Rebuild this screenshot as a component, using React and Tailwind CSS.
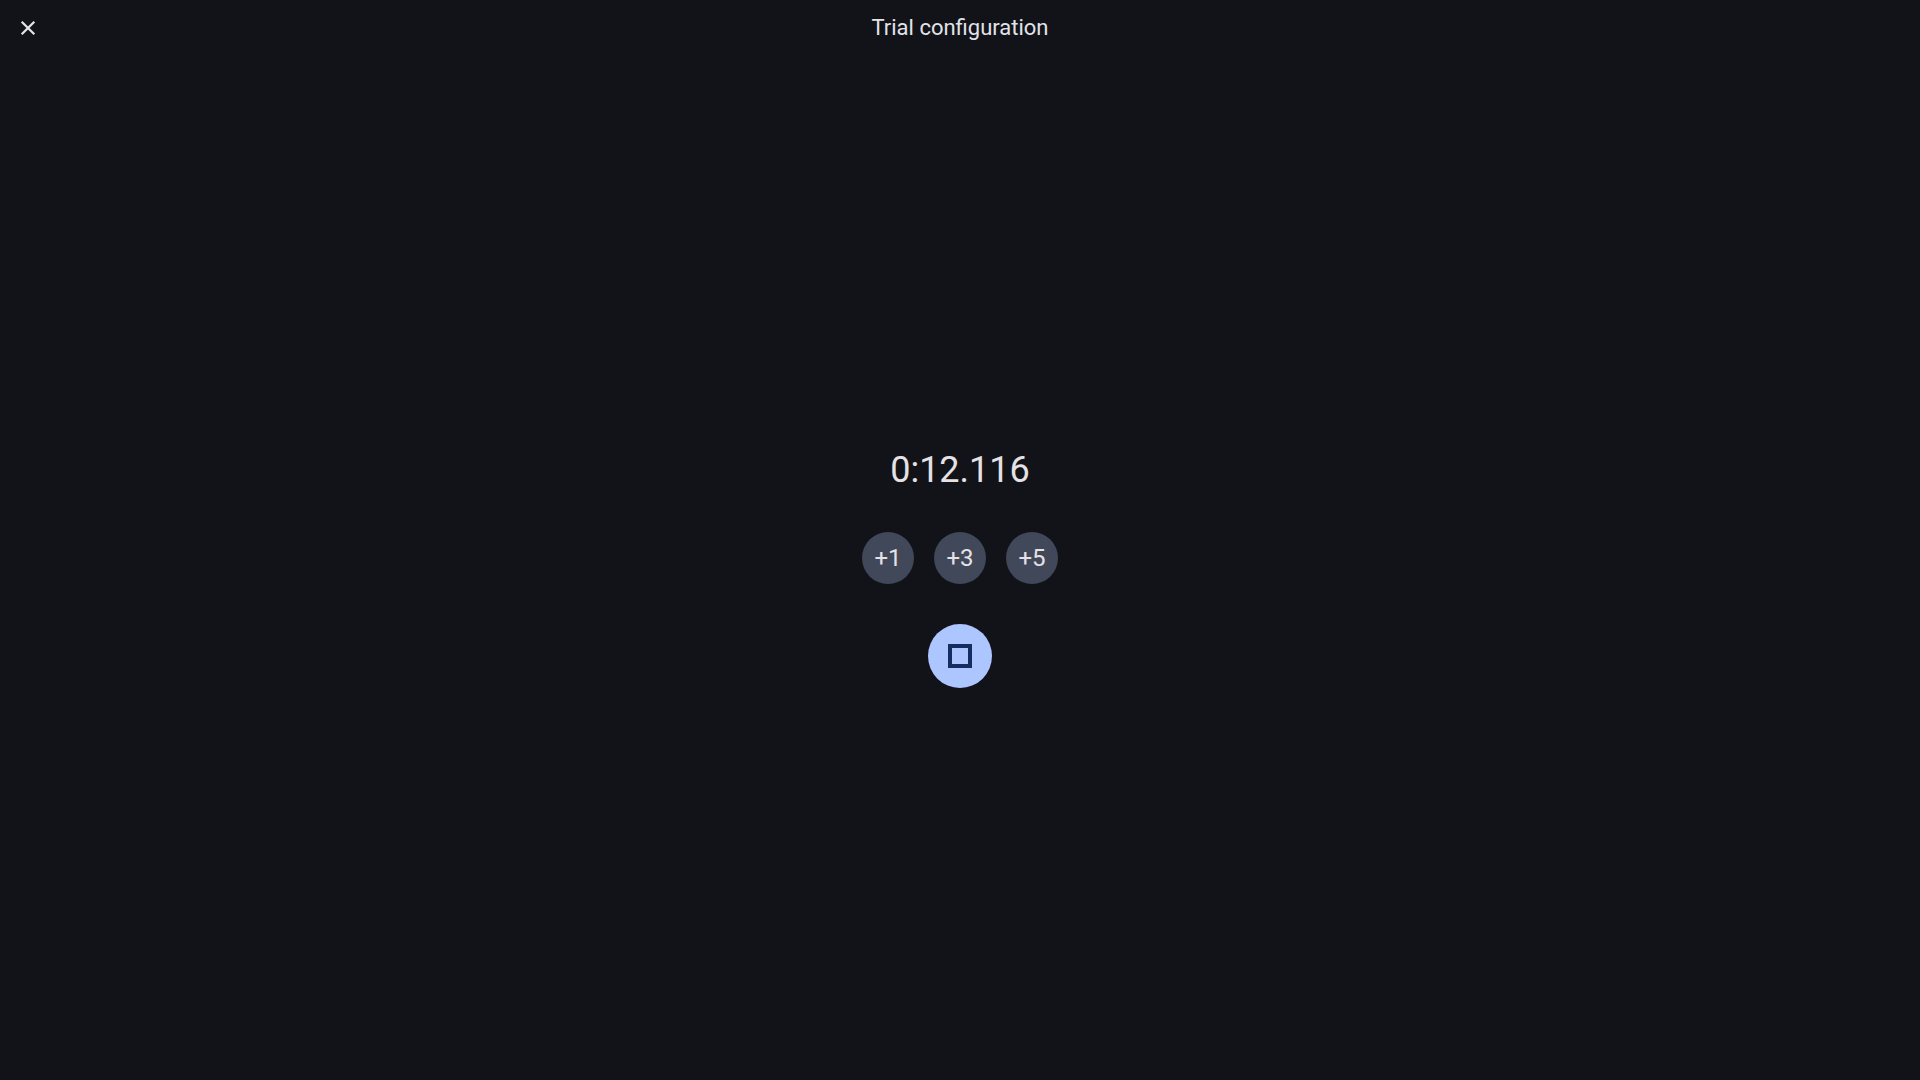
const increments = [1, 3, 5];

export default function App() {
  return (
    <div className="flex min-h-screen flex-col bg-[#111318] font-['Roboto',sans-serif] text-[#e6e1e5]">
      <header className="grid h-14 grid-cols-[56px_1fr_56px] items-center text-[#e2e2e9]">
        <button type="button" aria-label="Close" className="flex size-14 items-center justify-center">
          <svg viewBox="0 0 24 24" className="size-6" fill="none" stroke="currentColor" strokeWidth="2.3" aria-hidden="true">
            <path d="M5.7 5.7 18.3 18.3M18.3 5.7 5.7 18.3" />
          </svg>
        </button>
        <h1 className="text-center text-[22px] leading-7">Trial configuration</h1>
      </header>
      <main className="flex flex-1 flex-col items-center justify-center">
        <div className="text-4xl leading-11">0:12.116</div>
        <div className="mt-10 flex gap-5">
          {increments.map((n) => (
            <button key={n} type="button" className="size-13 rounded-full bg-[#414859] text-2xl">
              +{n}
            </button>
          ))}
        </div>
        <button type="button" aria-label="Stop" className="mt-10 flex size-16 items-center justify-center rounded-full bg-[#adc6ff] text-[#122f60]">
          <svg viewBox="0 0 24 24" className="size-12" fill="currentColor" aria-hidden="true">
            <path d="M16 8v8H8V8h8m2-2H6v12h12V6z" />
          </svg>
        </button>
      </main>
    </div>
  );
}
